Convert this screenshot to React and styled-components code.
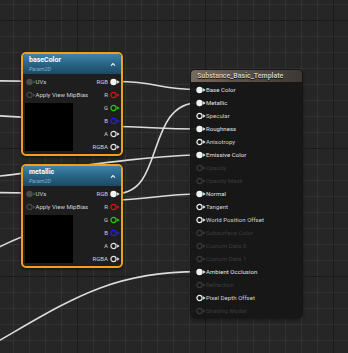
import React from 'react'
import styled, { createGlobalStyle } from 'styled-components'

const GlobalStyle = createGlobalStyle`
  html, body { margin: 0; padding: 0; background: #262626; overflow: hidden; }
  * { box-sizing: border-box; }
`

const WHITE = '#e6e6e6'
const DIM = '#3a3a3a'

const Pin = ({ filled, color = WHITE, noArrow }) => (
  <PinSvg width="10" height="8" viewBox="0 0 10 8">
    {filled ? (
      <circle cx="3.5" cy="4" r="3.2" fill={color} />
    ) : (
      <circle cx="3.5" cy="4" r="2.6" fill="none" stroke={color} strokeWidth="1.2" />
    )}
    {!noArrow && <polygon points="7.1,2.3 9.6,4 7.1,5.7" fill={color} />}
  </PinSvg>
)

const Chevron = () => (
  <ChevronSvg width="6" height="5" viewBox="0 0 6 5">
    <polyline points="1,3.6 3,1.6 5,3.6" fill="none" stroke="#f2f2f2" strokeWidth="1.1" />
  </ChevronSvg>
)

const outputs = [
  { label: 'RGB', filled: true, color: '#f4f4f4' },
  { label: 'R', color: '#e01010' },
  { label: 'G', color: '#18d018' },
  { label: 'B', color: '#2020f0' },
  { label: 'A', color: '#e0e0e0' },
  { label: 'RGBA', color: '#e0e0e0' },
]

const ParamNode = ({ title, x, y }) => (
  <ParamBox $x={x} $y={y}>
    <ParamHeader>
      <TitleBlock>
        <ParamTitle>{title}</ParamTitle>
        <ParamSub>Param2D</ParamSub>
      </TitleBlock>
      <Chevron />
    </ParamHeader>
    <ParamBody>
      <InColumn>
        <InRow>
          <Pin filled color="#4c4c4c" />
          <span>UVs</span>
        </InRow>
        <InRow>
          <Pin color="#474747" />
          <span>Apply View MipBias</span>
        </InRow>
        <Preview />
      </InColumn>
      <OutColumn>
        {outputs.map((o) => (
          <OutRow key={o.label}>
            <span>{o.label}</span>
            <Pin filled={o.filled} color={o.color} />
          </OutRow>
        ))}
      </OutColumn>
    </ParamBody>
  </ParamBox>
)

// state: 'on' = wired, 'free' = open pin, 'off' = greyed out
const inputs = [
  ['Base Color', 'on'],
  ['Metallic', 'on'],
  ['Specular', 'free'],
  ['Roughness', 'on'],
  ['Anisotropy', 'free'],
  ['Emissive Color', 'on'],
  ['Opacity', 'off'],
  ['Opacity Mask', 'off'],
  ['Normal', 'on'],
  ['Tangent', 'free'],
  ['World Position Offset', 'free'],
  ['Subsurface Color', 'off'],
  ['Custom Data 0', 'off'],
  ['Custom Data 1', 'off'],
  ['Ambient Occlusion', 'on'],
  ['Refraction', 'off'],
  ['Pixel Depth Offset', 'free'],
  ['Shading Model', 'off'],
]

const MaterialNode = () => (
  <MatBox>
    <MatHeader>Substance_Basic_Template</MatHeader>
    <MatBody>
      {inputs.map(([label, state]) => (
        <MatRow key={label} $state={state}>
          <Pin filled={state === 'on'} color={state === 'off' ? DIM : '#f0f0f0'} />
          <span>{label}</span>
        </MatRow>
      ))}
    </MatBody>
  </MatBox>
)

const wires = [
  'M -2 80.8 L 30 81.3',
  'M -2 115.8 L 30 117.6',
  'M -2 192.6 L 30 193',
  'M -2 247.5 C 8 243, 16 238.5, 30 234',
  'M 117 81.5 C 160 81.5, 155 89.6, 199 89.6',
  'M 110 126.5 C 150 126.5, 155 129, 199 129',
  'M -5 176.5 C 60 170, 120 158, 199 154.7',
  'M 117 193.5 C 165 193.5, 145 102.6, 199 102.6',
  'M 110 200.2 C 150 200.2, 160 194, 199 194',
  'M -5 343 C 70 300, 110 271.6, 199 271.6',
]

export default function App() {
  return (
    <>
      <GlobalStyle />
      <Canvas>
        <WireLayer width="348" height="353" viewBox="0 0 348 353">
          {wires.map((d, i) => (
            <path key={i} d={d} fill="none" stroke="#dcdcdc" strokeWidth="1.6" strokeLinecap="round" />
          ))}
        </WireLayer>
        <ParamNode title="baseColor" x={21} y={52} />
        <ParamNode title="metallic" x={21} y={164} />
        <MaterialNode />
      </Canvas>
    </>
  )
}

const Canvas = styled.div`
  position: relative;
  width: 348px;
  height: 353px;
  overflow: hidden;
  font-family: Roboto, 'Liberation Sans', sans-serif;
  background-color: #262626;
  background-image:
    linear-gradient(to right, #1a1a1a 1px, transparent 1px),
    linear-gradient(to bottom, #1a1a1a 1px, transparent 1px),
    linear-gradient(to right, #323232 1px, transparent 1px),
    linear-gradient(to bottom, #323232 1px, transparent 1px);
  background-size: 128px 128px, 128px 128px, 16px 16px, 16px 16px;
  background-position: 77px 0, 0 20px, 13px 0, 0 4px;
`

const WireLayer = styled.svg`
  position: absolute;
  left: 0;
  top: 0;
`

const PinSvg = styled.svg`
  flex: none;
  display: block;
`

const ChevronSvg = styled.svg`
  flex: none;
  display: block;
  margin-right: 2px;
`

const ParamBox = styled.div`
  position: absolute;
  left: ${(p) => p.$x}px;
  top: ${(p) => p.$y}px;
  width: 102px;
  border: 2px solid #f0a11c;
  border-radius: 5px;
  background: #1e1e1e;
  box-shadow: 0 1px 3px rgba(0, 0, 0, 0.6);
`

const ParamHeader = styled.div`
  display: flex;
  align-items: center;
  height: 20px;
  padding: 2px 3px 1px 6px;
  border-radius: 3px 3px 0 0;
  background: linear-gradient(to bottom, #3d85a9 0%, #2a6789 45%, #1b4963 100%);
`

const TitleBlock = styled.div`
  flex: 1;
  display: flex;
  flex-direction: column;
`

const ParamTitle = styled.div`
  font-size: 7px;
  line-height: 9px;
  font-weight: 700;
  color: #ffffff;
`

const ParamSub = styled.div`
  margin-top: 1px;
  font-size: 5.5px;
  line-height: 7px;
  font-style: italic;
  color: #8db2c6;
`

const ParamBody = styled.div`
  display: flex;
  justify-content: space-between;
  padding: 1px 1.5px 1px 2px;
`

const InColumn = styled.div`
  display: flex;
  flex-direction: column;
`

const InRow = styled.div`
  display: flex;
  align-items: center;
  height: 13px;
  padding-left: 0.5px;
  font-size: 6px;
  color: #d2d2d2;
  white-space: nowrap;
`

const Preview = styled.div`
  width: 48px;
  height: 48px;
  margin-top: 2px;
  background: #000;
`

const OutColumn = styled.div`
  display: flex;
  flex-direction: column;
  align-items: flex-end;
`

const OutRow = styled.div`
  display: flex;
  align-items: center;
  gap: 1.5px;
  height: 13px;
  font-size: 6px;
  color: #cfcfcf;
`

const MatBox = styled.div`
  position: absolute;
  left: 191px;
  top: 70px;
  width: 111px;
  border-radius: 4px;
  overflow: hidden;
  background: rgba(22, 22, 22, 0.95);
  box-shadow: 0 0 0 1px #151515, 0 2px 4px rgba(0, 0, 0, 0.55);
`

const MatHeader = styled.div`
  display: flex;
  align-items: center;
  height: 12px;
  padding-left: 6px;
  font-size: 7px;
  font-weight: 700;
  color: #cbcbcb;
  text-shadow: 0 1px 1px #000;
  background: linear-gradient(to right, #776a5f 0%, #5a514a 45%, #3d3834 100%);
  white-space: nowrap;
`

const MatBody = styled.div`
  padding: 1px 0 0 4.5px;
`

const MatRow = styled.div`
  display: flex;
  align-items: center;
  gap: 0.5px;
  height: 13px;
  font-size: 6px;
  letter-spacing: 0.05px;
  white-space: nowrap;
  color: ${(p) => (p.$state === 'off' ? '#3c3c3c' : p.$state === 'on' ? '#e4e4e4' : '#d4d4d4')};
`
